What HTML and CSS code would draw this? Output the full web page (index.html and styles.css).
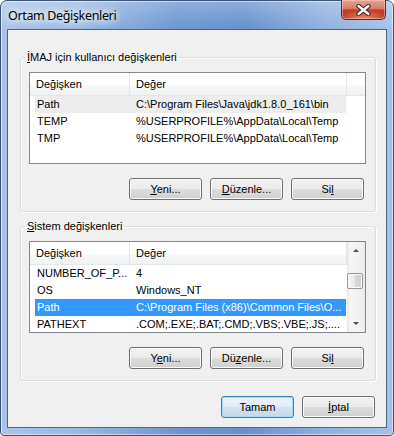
FILE: index.html
```html
<!DOCTYPE html>
<html>

<head>
  <meta charset="utf-8" />
  <title>Ortam Değişkenleri</title>
  <link rel="stylesheet" href="styles.css">
</head>

<body>
  <div class="window">
    <div class="titlebar">
      <span class="title">Ortam Değişkenleri</span>
      <button class="close" title="Kapat">
        <svg width="15" height="12" viewBox="0 0 15 12">
          <path d="M2.5 2 L12.5 10 M12.5 2 L2.5 10" stroke="#3a2320" stroke-width="4.4" stroke-linecap="round" fill="none" />
          <path d="M2.5 2 L12.5 10 M12.5 2 L2.5 10" stroke="#fff" stroke-width="2.4" stroke-linecap="round" fill="none" />
        </svg>
      </button>
    </div>

    <div class="client">
      <fieldset class="group group-user">
        <legend><u>İ</u>MAJ için kullanıcı değişkenleri</legend>
        <div class="list">
          <div class="list-main">
            <div class="list-head">
              <span class="col col-name">Değişken</span>
              <span class="col col-value">Değer</span>
              <span class="col col-rest"></span>
            </div>
            <div class="row inactive">
              <span class="cell cell-name">Path</span>
              <span class="cell cell-value">C:\Program Files\Java\jdk1.8.0_161\bin</span>
            </div>
            <div class="row">
              <span class="cell cell-name">TEMP</span>
              <span class="cell cell-value">%USERPROFILE%\AppData\Local\Temp</span>
            </div>
            <div class="row">
              <span class="cell cell-name">TMP</span>
              <span class="cell cell-value">%USERPROFILE%\AppData\Local\Temp</span>
            </div>
          </div>
        </div>
        <div class="buttons">
          <button class="btn"><u>Y</u>eni...</button>
          <button class="btn"><u>D</u>üzenle...</button>
          <button class="btn">Si<u>l</u></button>
        </div>
      </fieldset>

      <fieldset class="group group-system">
        <legend><u>S</u>istem değişkenleri</legend>
        <div class="list">
          <div class="list-main">
            <div class="list-head">
              <span class="col col-name">Değişken</span>
              <span class="col col-value">Değer</span>
            </div>
            <div class="row">
              <span class="cell cell-name">NUMBER_OF_P...</span>
              <span class="cell cell-value">4</span>
            </div>
            <div class="row">
              <span class="cell cell-name">OS</span>
              <span class="cell cell-value">Windows_NT</span>
            </div>
            <div class="row selected">
              <span class="cell cell-name">Path</span>
              <span class="cell cell-value">C:\Program Files (x86)\Common Files\O...</span>
            </div>
            <div class="row">
              <span class="cell cell-name">PATHEXT</span>
              <span class="cell cell-value">.COM;.EXE;.BAT;.CMD;.VBS;.VBE;.JS;....</span>
            </div>
          </div>
          <div class="scrollbar">
            <span class="arrow arrow-up"></span>
            <div class="track">
              <span class="thumb"></span>
            </div>
            <span class="arrow arrow-down"></span>
          </div>
        </div>
        <div class="buttons">
          <button class="btn">Y<u>e</u>ni...</button>
          <button class="btn">Dü<u>z</u>enle...</button>
          <button class="btn">Si<u>l</u></button>
        </div>
      </fieldset>

      <div class="footer">
        <button class="btn default">Tamam</button>
        <button class="btn"><u>İ</u>ptal</button>
      </div>
    </div>
  </div>
</body>

</html>
```

FILE: styles.css
```css
* {
  box-sizing: border-box;
}

html,
body {
  margin: 0;
  background: #fff;
}

body {
  font-family: "Liberation Sans", Tahoma, sans-serif;
  font-size: 11px;
  color: #000;
}

.window {
  width: 394px;
  height: 436px;
  display: flex;
  flex-direction: column;
  padding: 0 6px 7px 6px;
  border: 1px solid #3b5576;
  border-radius: 7px 7px 4px 4px;
  background:
    linear-gradient(rgba(255, 255, 255, 0.25), rgba(255, 255, 255, 0) 28px),
    linear-gradient(90deg, #a9c4e8 0%, #9ab9e3 20%, #6c96d2 45%, #6690ce 62%, #8fb0de 82%, #a6c2e7 100%);
  box-shadow: inset 0 0 0 1px rgba(255, 255, 255, 0.5);
}

.titlebar {
  height: 28px;
  display: flex;
  align-items: center;
  justify-content: space-between;
}

.title {
  margin: 1px 0 0 1px;
  font-family: "Noto Sans", "Open Sans", sans-serif;
  font-size: 12.5px;
  letter-spacing: -0.35px;
  color: #000;
  text-shadow: 0 0 6px #fff, 0 0 10px #fff, 0 0 14px rgba(255, 255, 255, 0.8);
}

.close {
  align-self: flex-start;
  width: 45px;
  height: 20px;
  margin: -1px 1px 0 0;
  padding: 0;
  display: flex;
  align-items: center;
  justify-content: center;
  border: 1px solid #5b2a23;
  border-top: none;
  border-radius: 0 0 5px 5px;
  background:
    radial-gradient(ellipse 60% 50% at 50% 100%, rgba(255, 150, 100, 0.9), rgba(255, 150, 100, 0) 100%),
    linear-gradient(#e9a393 0%, #d97a69 45%, #c53f29 52%, #b32f1a 100%);
  box-shadow: inset 0 0 0 1px rgba(255, 220, 210, 0.45);
}

.client {
  flex: 1;
  display: flex;
  flex-direction: column;
  padding: 21px 10px 9px 12px;
  border: 1px solid #4e6484;
  background: #f0f0f0;
}

/* group boxes */
.group {
  margin: 0;
  min-width: 0;
  padding: 8px 9px 11px 8px;
  border: 1px solid #d5dfe5;
  border-radius: 3px;
  box-shadow: inset 1px 1px 0 #fff, 1px 1px 0 #fff;
}

.group-system {
  margin-top: 8px;
}

legend {
  margin-left: -4px;
  padding: 0 2px;
  line-height: 13px;
}

/* list views */
.list {
  height: 92px;
  display: flex;
  overflow: hidden;
  border: 1px solid #828790;
  background: #fff;
}

.list-main {
  flex: 1;
  min-width: 0;
}

.list-head {
  display: flex;
  height: 23px;
  border-bottom: 1px solid #e5e6e8;
  background: linear-gradient(#fff 0%, #fff 55%, #f7f8f9 56%, #f1f2f4 100%);
}

.col {
  line-height: 22px;
  padding-left: 6px;
  border-right: 1px solid #e3e6ea;
  white-space: nowrap;
}

.col-name {
  width: 100px;
}

.col-value {
  width: 217px;
}

.col-rest {
  flex: 1;
  border-right: none;
}

.row {
  display: flex;
  width: 311px;
  height: 17px;
  margin-left: 5px;
  line-height: 17px;
}

.cell {
  white-space: nowrap;
  overflow: hidden;
}

.cell-name {
  width: 95px;
  padding-left: 2px;
}

.cell-value {
  flex: 1;
  padding-left: 6px;
}

.row.inactive {
  background: #ededed;
}

.row.selected {
  background: #3399ff;
  color: #fff;
  outline: 1px dotted #cc6a2c;
  outline-offset: -1px;
}

/* scrollbar */
.scrollbar {
  width: 18px;
  display: flex;
  flex-direction: column;
  background: linear-gradient(90deg, #e2e3e5 0%, #f6f6f6 15%, #f0f0f0 85%, #e6e6e6 100%);
}

.arrow {
  height: 17px;
  display: flex;
  align-items: center;
  justify-content: center;
}

.arrow::before {
  content: "";
  border-left: 3px solid transparent;
  border-right: 3px solid transparent;
}

.arrow-up::before {
  border-bottom: 3px solid #4d4d4d;
}

.arrow-down::before {
  border-top: 3px solid #4d4d4d;
}

.track {
  flex: 1;
  padding-top: 14px;
}

.thumb {
  display: block;
  width: 16px;
  height: 16px;
  border: 1px solid #979797;
  border-radius: 2px;
  background: linear-gradient(90deg, #f4f4f4 0%, #e8e8e8 50%, #d8d8d8 51%, #cfcfcf 100%);
  box-shadow: inset 0 0 0 1px #fbfbfb;
}

/* buttons */
.buttons {
  display: flex;
  justify-content: flex-end;
  gap: 8px;
  margin: 14px 2px 0 0;
}

.btn {
  width: 73px;
  height: 22px;
  padding: 0;
  font: inherit;
  color: #000;
  border: 1px solid #707070;
  border-radius: 3px;
  background: linear-gradient(#f2f2f2 0%, #ebebeb 48%, #dddddd 50%, #cfcfcf 100%);
  box-shadow: inset 0 0 0 1px #fbfbfb;
}

.btn.default {
  border-color: #3c7fb1;
  background: linear-gradient(#edf4fa 0%, #e2ecf5 48%, #d2e2ef 50%, #c6d9e9 100%);
  box-shadow: inset 0 0 0 1px #9fdcf9;
}

.footer {
  display: flex;
  justify-content: flex-end;
  gap: 8px;
  margin: auto 1px 0 0;
}
```
